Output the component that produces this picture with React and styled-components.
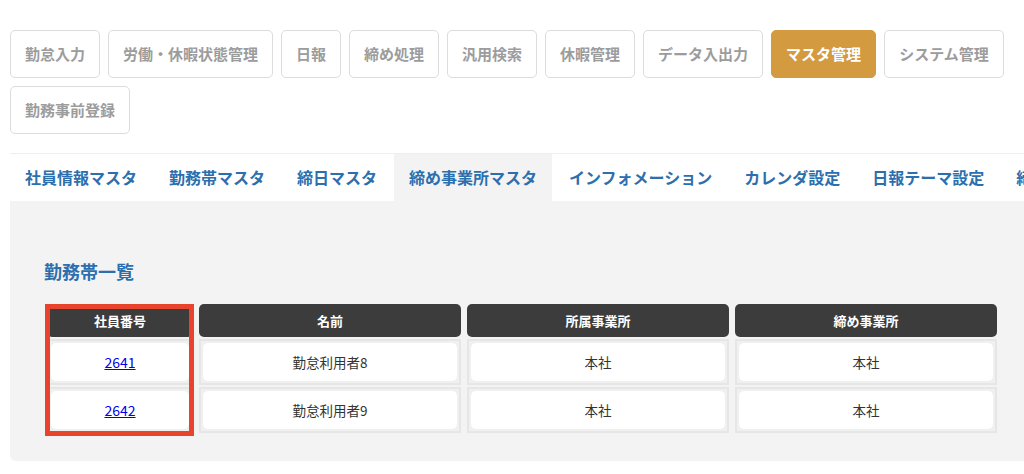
import React from "react";
import styled, { createGlobalStyle } from "styled-components";

const Global = createGlobalStyle`
  html, body { margin: 0; padding: 0; background: #fff; overflow: hidden; }
  body { font-family: "Noto Sans CJK JP", "Noto Sans", sans-serif; }
  * { box-sizing: border-box; }
`;

const Page = styled.div`
  width: 1024px;
  padding: 30px 10px 0 10px;
`;

const MenuBar = styled.nav`
  display: flex;
  flex-wrap: wrap;
  gap: 8px 8px;
`;

const MenuButton = styled.button`
  height: 48px;
  padding: 0 14px;
  border: 1px solid ${(p) => (p.$active ? "#d49a3f" : "#dcdcdc")};
  border-radius: 5px;
  background: ${(p) => (p.$active ? "#d49a3f" : "#fff")};
  color: ${(p) => (p.$active ? "#fff" : "#9c9c9c")};
  font-family: inherit;
  font-size: 15px;
  font-weight: 700;
  line-height: 46px;
  white-space: nowrap;
`;

const TabBar = styled.div`
  display: flex;
  flex-wrap: nowrap;
  margin-top: 19px;
  margin-right: -120px;
  border-top: 1px solid #eeeeee;
`;

const Tab = styled.div`
  flex: none;
  height: 47px;
  padding: 0 15px;
  margin-right: 2px;
  background: ${(p) => (p.$active ? "#f3f3f3" : "#fff")};
  color: #2c6fae;
  font-size: 16px;
  font-weight: 700;
  line-height: 47px;
  white-space: nowrap;
`;

const Panel = styled.section`
  margin-right: -120px;
  height: 260px;
  background: #f3f3f3;
  border-radius: 0 0 0 6px;
  padding: 58px 0 0 34px;
`;

const Title = styled.h2`
  margin: 0 0 21px 0;
  font-size: 18px;
  line-height: 24px;
  font-weight: 700;
  color: #2c6fae;
`;

const TableWrap = styled.div`
  position: relative;
  margin-left: 3px;
  width: 950px;
`;

const Grid = styled.div`
  display: grid;
  grid-template-columns: 146px 262px 262px 262px;
  column-gap: 6px;
  row-gap: 2px;
`;

const HeadCell = styled.div`
  height: 33px;
  background: #3c3c3c;
  border-radius: 5px;
  color: #fff;
  font-size: 13px;
  font-weight: 700;
  line-height: 33px;
  text-align: center;
`;

const Cell = styled.div`
  height: 46px;
  border: 2px solid #e6e6e6;
  background: #f0f0f0;
  padding: 2px;
`;

const CellInner = styled.div`
  height: 100%;
  background: #fff;
  border-radius: 5px;
  display: flex;
  align-items: center;
  justify-content: center;
  font-size: 13.5px;
  color: #333;
`;

const IdLink = styled.a`
  color: #0000ee;
  text-decoration: underline;
  font-size: 14px;
`;

const Highlight = styled.div`
  position: absolute;
  left: -2px;
  top: 0;
  width: 149px;
  height: 132px;
  border: 5px solid #e8432b;
  pointer-events: none;
`;

const menus = [
  "勤怠入力",
  "労働・休暇状態管理",
  "日報",
  "締め処理",
  "汎用検索",
  "休暇管理",
  "データ入出力",
  "マスタ管理",
  "システム管理",
  "勤務事前登録",
];

const tabs = [
  "社員情報マスタ",
  "勤務帯マスタ",
  "締日マスタ",
  "締め事業所マスタ",
  "インフォメーション",
  "カレンダ設定",
  "日報テーマ設定",
  "締め処理設定",
];

const heads = ["社員番号", "名前", "所属事業所", "締め事業所"];

const rows = [
  { id: "2641", name: "勤怠利用者8", office: "本社", closing: "本社" },
  { id: "2642", name: "勤怠利用者9", office: "本社", closing: "本社" },
];

export default function App() {
  return (
    <>
      <Global />
      <Page>
        <MenuBar>
          {menus.map((m) => (
            <MenuButton key={m} $active={m === "マスタ管理"}>
              {m}
            </MenuButton>
          ))}
        </MenuBar>
        <TabBar>
          {tabs.map((t) => (
            <Tab key={t} $active={t === "締め事業所マスタ"}>
              {t}
            </Tab>
          ))}
        </TabBar>
        <Panel>
          <Title>勤務帯一覧</Title>
          <TableWrap>
            <Grid>
              {heads.map((h) => (
                <HeadCell key={h}>{h}</HeadCell>
              ))}
              {rows.map((r) => (
                <React.Fragment key={r.id}>
                  <Cell>
                    <CellInner>
                      <IdLink href="#">{r.id}</IdLink>
                    </CellInner>
                  </Cell>
                  <Cell>
                    <CellInner>{r.name}</CellInner>
                  </Cell>
                  <Cell>
                    <CellInner>{r.office}</CellInner>
                  </Cell>
                  <Cell>
                    <CellInner>{r.closing}</CellInner>
                  </Cell>
                </React.Fragment>
              ))}
            </Grid>
            <Highlight />
          </TableWrap>
        </Panel>
      </Page>
    </>
  );
}
